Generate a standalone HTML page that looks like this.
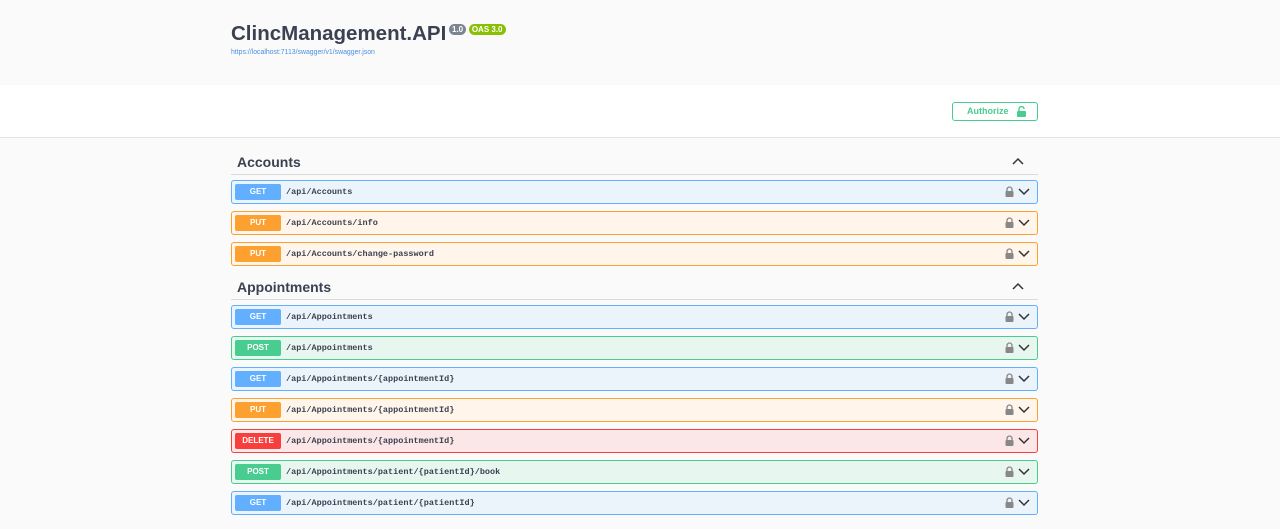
<!DOCTYPE html>
<html><head><style>
body{margin:0;background:#fafafa;font-family:"Liberation Sans",sans-serif;width:1280px;height:529px;overflow:hidden}
.top{height:85px;background:#fafafa;position:relative}
.title{position:absolute;left:231px;top:22px;font-size:20.5px;font-weight:bold;color:#3b4151}
.b{display:inline-block;font-size:8px;color:#fff;border-radius:6px;padding:1px 3px;vertical-align:top;margin-top:2px;font-weight:bold}
.url{position:absolute;left:231px;top:49px;font-size:6.9px;color:#4990e2}
.auth{height:52px;background:#fff;border-bottom:1px solid #e5e5e5;position:relative}
.ab{position:absolute;left:952px;top:17px;border:1px solid #49cc90;border-radius:3px;color:#49cc90;font-size:9px;font-weight:bold;line-height:17px;padding-left:14px;box-sizing:border-box;width:86px;height:19px}
.ab svg{position:absolute;right:11px;top:3px}
.wrap{position:absolute;left:231px;width:807px}
.h{font-size:14px;font-weight:bold;color:#3b4151;height:24px;border-bottom:1px solid #d8dade;position:relative;padding-left:6px;line-height:24px}
.h svg{position:absolute;right:14px;top:7px}
.op{height:22px;border:1px solid;border-radius:3px;margin-top:7px;position:relative;box-sizing:content-box}
.op .m{position:absolute;left:3px;top:3px;width:46px;height:16px;border-radius:2px;color:#fff;font-size:8px;font-weight:bold;text-align:center;line-height:16px}
.op .p{position:absolute;left:54px;top:6px;font-family:"Liberation Mono",monospace;font-size:8.5px;font-weight:bold;color:#3b4151}
.op svg{position:absolute;right:6px;top:5px}
.g{background:#ebf3fb;border-color:#61affe}.g .m{background:#61affe}
.u{background:#fff5ea;border-color:#fca130}.u .m{background:#fca130}
.po{background:#e8f6f0;border-color:#49cc90}.po .m{background:#49cc90}
.d{background:#fbe7e7;border-color:#f93e3e}.d .m{background:#f93e3e}
</style></head><body>
<div class="top"><div class="title">ClincManagement.API <span class="b" style="background:#7d8492;margin-left:-3px">1.0</span> <span class="b" style="background:#89bf04;margin-left:-3px">OAS 3.0</span></div><div class="url">https://localhost:7113/swagger/v1/swagger.json</div></div>
<div class="auth"><div class="ab">Authorize<svg width="9" height="11" viewBox="0 0 9 11"><path d="M2 5V3a2.5 2.5 0 0 1 5 0" stroke="#49cc90" stroke-width="1.4" fill="none"/><rect x="0" y="5" width="9" height="6" rx="1" fill="#49cc90"/></svg></div></div>
<div class="wrap" style="top:150px">
<div class="h">Accounts<svg width="12" height="8"><path d="M1 7l5-5 5 5" stroke="#333" stroke-width="1.5" fill="none"/></svg></div>
<div class="op g" style="margin-top:5px"><div class="m">GET</div><div class="p">/api/Accounts</div><svg width="26" height="12"><path d="M2 5V3.5a2.5 2.5 0 0 1 5 0V5" stroke="#888" stroke-width="1.3" fill="none"/><rect x="0.5" y="5" width="8" height="6" rx="1" fill="#888"/><path d="M14 3l5 5 5-5" stroke="#333" stroke-width="1.5" fill="none"/></svg></div>
<div class="op u"><div class="m">PUT</div><div class="p">/api/Accounts/info</div><svg width="26" height="12"><path d="M2 5V3.5a2.5 2.5 0 0 1 5 0V5" stroke="#888" stroke-width="1.3" fill="none"/><rect x="0.5" y="5" width="8" height="6" rx="1" fill="#888"/><path d="M14 3l5 5 5-5" stroke="#333" stroke-width="1.5" fill="none"/></svg></div>
<div class="op u"><div class="m">PUT</div><div class="p">/api/Accounts/change-password</div><svg width="26" height="12"><path d="M2 5V3.5a2.5 2.5 0 0 1 5 0V5" stroke="#888" stroke-width="1.3" fill="none"/><rect x="0.5" y="5" width="8" height="6" rx="1" fill="#888"/><path d="M14 3l5 5 5-5" stroke="#333" stroke-width="1.5" fill="none"/></svg></div>
</div>
<div class="wrap" style="top:275px">
<div class="h">Appointments<svg width="12" height="8"><path d="M1 7l5-5 5 5" stroke="#333" stroke-width="1.5" fill="none"/></svg></div>
<div class="op g" style="margin-top:5px"><div class="m">GET</div><div class="p">/api/Appointments</div><svg width="26" height="12"><path d="M2 5V3.5a2.5 2.5 0 0 1 5 0V5" stroke="#888" stroke-width="1.3" fill="none"/><rect x="0.5" y="5" width="8" height="6" rx="1" fill="#888"/><path d="M14 3l5 5 5-5" stroke="#333" stroke-width="1.5" fill="none"/></svg></div>
<div class="op po"><div class="m">POST</div><div class="p">/api/Appointments</div><svg width="26" height="12"><path d="M2 5V3.5a2.5 2.5 0 0 1 5 0V5" stroke="#888" stroke-width="1.3" fill="none"/><rect x="0.5" y="5" width="8" height="6" rx="1" fill="#888"/><path d="M14 3l5 5 5-5" stroke="#333" stroke-width="1.5" fill="none"/></svg></div>
<div class="op g"><div class="m">GET</div><div class="p">/api/Appointments/{appointmentId}</div><svg width="26" height="12"><path d="M2 5V3.5a2.5 2.5 0 0 1 5 0V5" stroke="#888" stroke-width="1.3" fill="none"/><rect x="0.5" y="5" width="8" height="6" rx="1" fill="#888"/><path d="M14 3l5 5 5-5" stroke="#333" stroke-width="1.5" fill="none"/></svg></div>
<div class="op u"><div class="m">PUT</div><div class="p">/api/Appointments/{appointmentId}</div><svg width="26" height="12"><path d="M2 5V3.5a2.5 2.5 0 0 1 5 0V5" stroke="#888" stroke-width="1.3" fill="none"/><rect x="0.5" y="5" width="8" height="6" rx="1" fill="#888"/><path d="M14 3l5 5 5-5" stroke="#333" stroke-width="1.5" fill="none"/></svg></div>
<div class="op d"><div class="m">DELETE</div><div class="p">/api/Appointments/{appointmentId}</div><svg width="26" height="12"><path d="M2 5V3.5a2.5 2.5 0 0 1 5 0V5" stroke="#888" stroke-width="1.3" fill="none"/><rect x="0.5" y="5" width="8" height="6" rx="1" fill="#888"/><path d="M14 3l5 5 5-5" stroke="#333" stroke-width="1.5" fill="none"/></svg></div>
<div class="op po"><div class="m">POST</div><div class="p">/api/Appointments/patient/{patientId}/book</div><svg width="26" height="12"><path d="M2 5V3.5a2.5 2.5 0 0 1 5 0V5" stroke="#888" stroke-width="1.3" fill="none"/><rect x="0.5" y="5" width="8" height="6" rx="1" fill="#888"/><path d="M14 3l5 5 5-5" stroke="#333" stroke-width="1.5" fill="none"/></svg></div>
<div class="op g"><div class="m">GET</div><div class="p">/api/Appointments/patient/{patientId}</div><svg width="26" height="12"><path d="M2 5V3.5a2.5 2.5 0 0 1 5 0V5" stroke="#888" stroke-width="1.3" fill="none"/><rect x="0.5" y="5" width="8" height="6" rx="1" fill="#888"/><path d="M14 3l5 5 5-5" stroke="#333" stroke-width="1.5" fill="none"/></svg></div>
</div>
</body></html>
